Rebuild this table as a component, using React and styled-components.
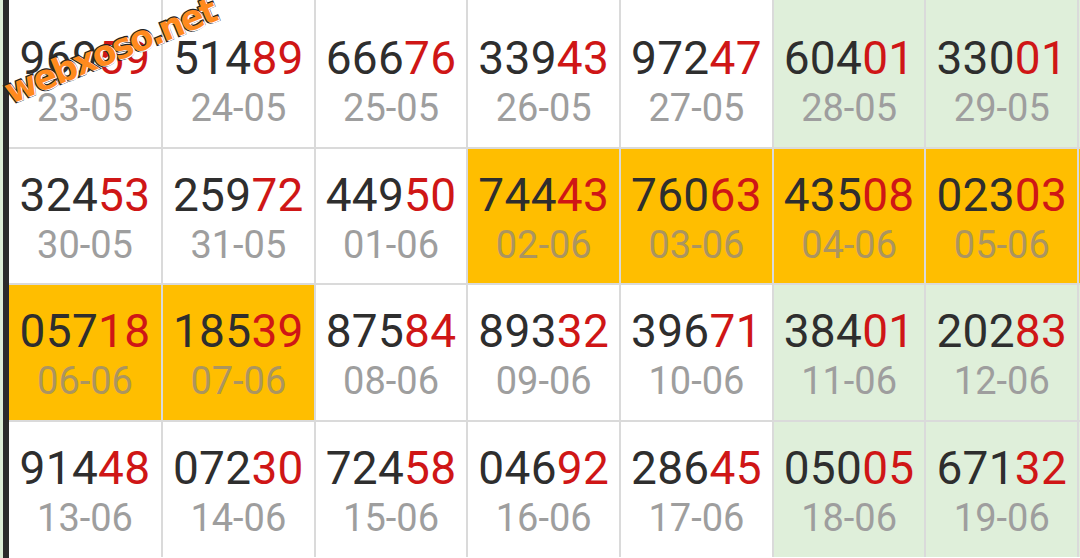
import React from "react";
import styled, { createGlobalStyle } from "styled-components";

const rows = [
  [
    ["96959", "23-05"],
    ["51489", "24-05"],
    ["66676", "25-05"],
    ["33943", "26-05"],
    ["97247", "27-05"],
    ["60401", "28-05"],
    ["33001", "29-05"],
  ],
  [
    ["32453", "30-05"],
    ["25972", "31-05"],
    ["44950", "01-06"],
    ["74443", "02-06", true],
    ["76063", "03-06", true],
    ["43508", "04-06", true],
    ["02303", "05-06", true],
  ],
  [
    ["05718", "06-06", true],
    ["18539", "07-06", true],
    ["87584", "08-06"],
    ["89332", "09-06"],
    ["39671", "10-06"],
    ["38401", "11-06"],
    ["20283", "12-06"],
  ],
  [
    ["91448", "13-06"],
    ["07230", "14-06"],
    ["72458", "15-06"],
    ["04692", "16-06"],
    ["28645", "17-06"],
    ["05005", "18-06"],
    ["67132", "19-06"],
  ],
];

function App() {
  return (
    <>
      <GlobalStyle />
      <Page>
        <Edge />
        <Bar />
        <Table>
          {[0, 1, 2, 3, 4, 5, 6, 7].map((c) => (
            <Cell key={"top" + c} kind={c >= 5 ? "week" : "plain"} />
          ))}
          {rows.map((row, r) => (
            <React.Fragment key={r}>
              {row.map(([num, date, hot], c) => (
                <Cell key={c} kind={hot ? "hot" : c >= 5 ? "week" : "plain"}>
                  <Num>
                    {num.slice(0, 3)}
                    <Tail>{num.slice(3)}</Tail>
                  </Num>
                  <DateText hot={hot}>{date}</DateText>
                </Cell>
              ))}
              <Cell kind={r === 1 ? "hot" : "week"} />
            </React.Fragment>
          ))}
        </Table>
        <Watermark>webxoso.net</Watermark>
      </Page>
    </>
  );
}

const GlobalStyle = createGlobalStyle`
  body {
    margin: 0;
    overflow: hidden;
    background: #fff;
  }
`;

const Page = styled.div`
  position: relative;
  width: 1080px;
  height: 558px;
  overflow: hidden;
  display: flex;
  font-family: Roboto, "Noto Sans", sans-serif;
`;

const Edge = styled.div`
  width: 3px;
  flex: none;
  background: #dcedd6;
`;

const Bar = styled.div`
  width: 6px;
  flex: none;
  background: #2b2b2b;
`;

const Table = styled.div`
  flex: none;
  display: grid;
  grid-template-columns: 152px repeat(7, 150.7px);
  grid-template-rows: 10px repeat(4, 134.7px);
  gap: 2px;
  background: #dadada;
  align-self: flex-start;
`;

const bg = {
  plain: "#ffffff",
  week: "#dfefda",
  hot: "#ffbe00",
};

const Cell = styled.div`
  background: ${(p) => bg[p.kind]};
  display: flex;
  flex-direction: column;
  align-items: center;
  padding-top: 22px;
  box-sizing: border-box;
`;

const Num = styled.div`
  font-size: 46px;
  line-height: 48px;
  color: #2e2e2e;
  letter-spacing: 0.3px;
`;

const Tail = styled.span`
  color: #cf1616;
`;

const DateText = styled.div`
  font-size: 38px;
  line-height: 53px;
  color: ${(p) => (p.hot ? "#ab9560" : "#9e9e9e")};
`;

const Watermark = styled.div`
  position: absolute;
  left: 6px;
  top: 73px;
  line-height: 40px;
  transform-origin: 0 50%;
  transform: rotate(-22deg);
  font-family: "DejaVu Sans", sans-serif;
  font-weight: bold;
  font-size: 35px;
  letter-spacing: -2.5px;
  white-space: nowrap;
  color: #ff8a1e;
  -webkit-text-stroke: 2.5px #222;
  paint-order: stroke fill;
  text-shadow: 1px 1px 0 #fff;
`;

export default App;
